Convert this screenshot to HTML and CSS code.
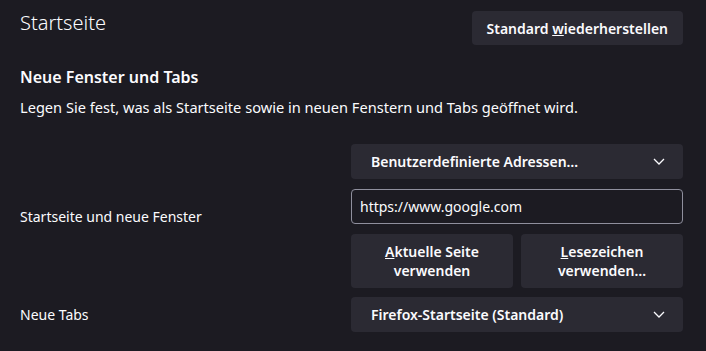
FILE: index.html
```html
<!DOCTYPE html>
<html lang="de">
<head>
    <meta charset="UTF-8">
    <meta name="viewport" content="width=device-width, initial-scale=1.0">
    <title>Startseite</title>
    <link rel="stylesheet" href="styles.css">
</head>
<body>
    <div class="page">
        <div class="header">
            <h1 class="title">Startseite</h1>
            <button class="button">Standard <u>w</u>iederherstellen</button>
        </div>

        <h2 class="subtitle">Neue Fenster und Tabs</h2>
        <p class="description">Legen Sie fest, was als Startseite sowie in neuen Fenstern und Tabs geöffnet wird.</p>

        <div class="settings">
            <div class="label">Startseite und neue Fenster</div>
            <div class="controls">
                <div class="select">
                    <span>Benutzerdefinierte Adressen…</span>
                    <svg class="chevron" width="12" height="7" viewBox="0 0 12 7"><path d="M1 1l5 5 5-5" fill="none" stroke="#fbfbfe" stroke-width="1.3"/></svg>
                </div>
                <input class="url" type="text" value="https://www.google.com">
                <div class="button-row">
                    <button class="button"><u>A</u>ktuelle Seite<br>verwenden</button>
                    <button class="button"><u>L</u>esezeichen<br>verwenden…</button>
                </div>
            </div>

            <div class="label">Neue Tabs</div>
            <div class="controls">
                <div class="select">
                    <span>Firefox-Startseite (Standard)</span>
                    <svg class="chevron" width="12" height="7" viewBox="0 0 12 7"><path d="M1 1l5 5 5-5" fill="none" stroke="#fbfbfe" stroke-width="1.3"/></svg>
                </div>
            </div>
        </div>
    </div>
</body>
</html>
```

FILE: styles.css
```css
body {
    margin: 0;
    background-color: #1c1b22;
    color: #fbfbfe;
    font-family: "Noto Sans", "Open Sans", sans-serif;
    font-size: 14px;
}

.page {
    width: 663px;
    padding: 11px 0 0 20px;
}

.header {
    display: flex;
    justify-content: space-between;
    align-items: flex-start;
}

.title {
    margin: 0;
    font-size: 20px;
    font-weight: 300;
    line-height: 24px;
}

.button {
    font-family: inherit;
    font-size: 14px;
    font-weight: 600;
    color: #fbfbfe;
    background-color: #2b2a33;
    border: none;
    border-radius: 4px;
    padding: 0 16px;
    min-height: 34px;
    line-height: 19px;
    cursor: pointer;
}

.header .button {
    padding: 0 15px;
    white-space: nowrap;
}

.subtitle {
    margin: 21px 0 0;
    font-size: 16px;
    font-weight: 600;
    line-height: 22px;
}

.description {
    margin: 9px 0 0;
    font-size: 14.6px;
    line-height: 20px;
}

.settings {
    display: grid;
    grid-template-columns: 331px 332px;
    row-gap: 9px;
    align-items: center;
    margin-top: 27px;
}

.controls {
    display: flex;
    flex-direction: column;
    gap: 10px;
}

.select {
    display: flex;
    justify-content: space-between;
    align-items: center;
    height: 35px;
    padding: 0 18px 0 20px;
    background-color: #2b2a33;
    border-radius: 4px;
    font-weight: 600;
}

.url {
    height: 35px;
    box-sizing: border-box;
    padding: 0 8px;
    background-color: #1c1b22;
    color: #fbfbfe;
    border: 1px solid #8f8f9d;
    border-radius: 4px;
    font-family: inherit;
    font-size: 14px;
}

.button-row {
    display: grid;
    grid-template-columns: 1fr 1fr;
    gap: 8px;
}

.button-row .button {
    height: 54px;
}
```
